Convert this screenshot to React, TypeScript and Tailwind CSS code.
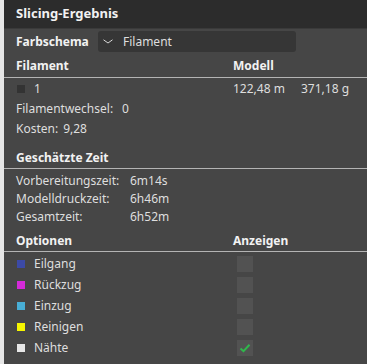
import React from "react";

const options = [
  { label: "Eilgang", color: "bg-[#3c4aa6]", checked: false },
  { label: "Rückzug", color: "bg-[#d42ad8]", checked: false },
  { label: "Einzug", color: "bg-[#48aed6]", checked: false },
  { label: "Reinigen", color: "bg-[#f6f600]", checked: false },
  { label: "Nähte", color: "bg-[#e6e6e6]", checked: true },
];

const times = [
  { label: "Vorbereitungszeit:", value: "6m14s" },
  { label: "Modelldruckzeit:", value: "6h46m" },
  { label: "Gesamtzeit:", value: "6h52m" },
];

const SectionHead = ({ left, right, className = "" }: { left: string; right?: string; className?: string }) => (
  <div className={`flex items-center h-[22px] border-b border-[#b4b4b4] font-bold text-[#f2f2f2] ${className}`}>
    <span className="pl-3 w-[229px]">{left}</span>
    {right && <span>{right}</span>}
  </div>
);

const App = () => {
  return (
    <div
      className="flex w-[367px] h-[364px] bg-[#e6e6e6] text-[12px] text-[#dedede]"
      style={{ fontFamily: '"Noto Sans", "Open Sans", sans-serif' }}
    >
      <div className="w-1" />
      <div className="flex-1 bg-[#464646] flex flex-col">
        {/* Header */}
        <div className="h-[29px] bg-[#2c2c2c] border-b border-[#3a3a3a] flex items-center pl-3 font-bold text-[13px] text-[#f2f2f2]">
          Slicing-Ergebnis
        </div>

        {/* Farbschema */}
        <div className="flex items-center h-[25px] pl-3">
          <span className="font-bold text-[#f2f2f2] w-[82px]">Farbschema</span>
          <div className="w-[198px] h-[21px] rounded-[3px] bg-[#363636] flex items-center pl-[5px]">
            <svg width="10" height="5" viewBox="0 0 10 5" className="mr-[10px]">
              <path d="M0.5 0.8 L5 4 L9.5 0.8" fill="none" stroke="#d8d8d8" strokeWidth="1" />
            </svg>
            <span>Filament</span>
          </div>
        </div>

        {/* Filament table */}
        <SectionHead left="Filament" right="Modell" className="h-[24px] pt-[1px]" />
        <div className="flex items-center h-[21px]">
          <span className="ml-[13px] w-2 h-2 bg-[#333333] mr-[9px]" />
          <span className="w-[199px]">1</span>
          <span className="w-[68px]">122,48 m</span>
          <span>371,18 g</span>
        </div>
        <div className="flex items-center h-[20px] pl-3">
          <span className="mr-[9px]">Filamentwechsel:</span>
          <span>0</span>
        </div>
        <div className="flex items-center h-[20px] pl-3">
          <span className="mr-[5px]">Kosten:</span>
          <span>9,28</span>
        </div>

        {/* Time */}
        <SectionHead left="Geschätzte Zeit" className="mt-[8px]" />
        <div className="pt-[3px]">
          {times.map(t => (
            <div key={t.label} className="flex items-center h-[18px] pl-3">
              <span className="w-[114px]">{t.label}</span>
              <span>{t.value}</span>
            </div>
          ))}
        </div>

        {/* Options */}
        <SectionHead left="Optionen" right="Anzeigen" className="mt-[4px]" />
        <div className="pt-[1px]">
          {options.map(o => (
            <div key={o.label} className="flex items-center h-[21px]">
              <span className={`ml-[13px] w-2 h-2 ${o.color} mr-[9px]`} />
              <span className="w-[203px]">{o.label}</span>
              <span className="w-4 h-4 bg-[#525252] flex items-center justify-center">
                {o.checked && (
                  <svg width="12" height="10" viewBox="0 0 12 10">
                    <path d="M1.5 5.5 L4.5 8.2 L10.5 1.8" fill="none" stroke="#2fb84c" strokeWidth="2" />
                  </svg>
                )}
              </span>
            </div>
          ))}
        </div>
      </div>
    </div>
  );
};

export default App;
